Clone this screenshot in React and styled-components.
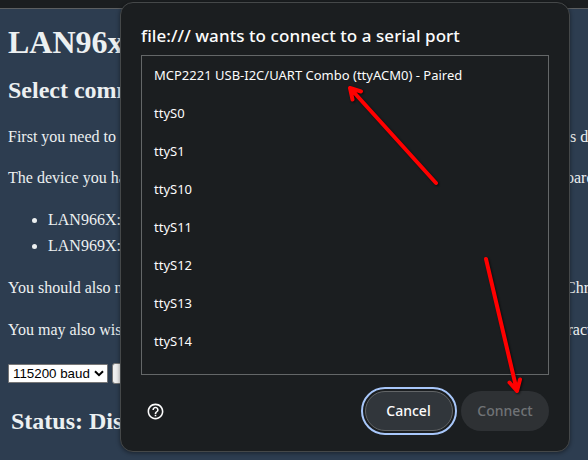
import React from "react";
import styled, { createGlobalStyle } from "styled-components";

const Global = createGlobalStyle`
  * { box-sizing: border-box; }
  body { margin: 0; background: #2d3d50; overflow: hidden; }
`;

const Screen = styled.div`
  position: relative;
  width: 588px;
  height: 460px;
  overflow: hidden;
  background: #2d3d50;
`;

const BrowserBar = styled.div`
  height: 9px;
  background: #1b1e20;
  border-bottom: 1px solid #5c5f61;
`;

const Page = styled.main`
  padding: 8px 0 0 8px;
  color: #ecf0f1;
  font: 16px/25.6px "Liberation Serif", "Times New Roman", serif;
  white-space: nowrap;
`;

const PageTitle = styled.h1`
  margin: 0;
  font-size: 32px;
  line-height: 51px;
`;

const Section = styled.h2`
  margin: 2.6px 0 0;
  font-size: 24px;
  line-height: 38.4px;
`;

const Paragraph = styled.p`
  display: grid;
  grid-template-columns: ${(p) => p.$split}px auto;
  margin: ${(p) => p.$top || 16}px 0 0;
`;

const Devices = styled.ul`
  margin: 17px 0 0;
  padding-left: 40px;
`;

const Controls = styled.div`
  display: flex;
  align-items: center;
  gap: 4px;
  height: 22px;
  margin-top: 20px;
`;

const BaudSelect = styled.div`
  display: flex;
  align-items: center;
  justify-content: space-between;
  width: 100px;
  height: 19px;
  padding: 0 3px 0 4px;
  border: 1px solid #767676;
  border-radius: 1px;
  background: #fff;
  color: #000;
  font: 13.333px "Liberation Sans", Arial, sans-serif;
`;

const PageButton = styled.div`
  width: 60px;
  height: 21px;
  border: 1px solid #767676;
  border-radius: 3px;
  background: #efefef;
`;

const Status = styled.h2`
  margin: 18px 0 0 3px;
  font-size: 24px;
  line-height: 38.4px;
`;

const Dialog = styled.section`
  position: absolute;
  left: 120px;
  top: 2px;
  width: 450px;
  height: 450px;
  display: flex;
  flex-direction: column;
  padding: 20px 20px 16px;
  border: 1px solid #454849;
  border-radius: 13px;
  background: #1b1e20;
  color: #fcfcfc;
  font-family: "Noto Sans", sans-serif;
  box-shadow: 0 1px 4px rgba(0, 0, 0, 0.45);
`;

const DialogTitle = styled.h2`
  margin: 0;
  height: 32px;
  font-size: 17px;
  font-weight: 500;
  letter-spacing: 0.07px;
  line-height: 26px;
  white-space: nowrap;
`;

const PortList = styled.ul`
  list-style: none;
  margin: 0;
  padding: 0 12px;
  width: 408px;
  height: 320px;
  border: 1px solid #646768;
`;

const Port = styled.li`
  height: 38px;
  font-size: 13px;
  line-height: 38px;
  white-space: nowrap;
`;

const Footer = styled.footer`
  display: flex;
  align-items: center;
  gap: 8px;
  height: 46px;
  margin-top: 13px;
`;

const HelpIcon = styled.svg`
  width: 19px;
  height: 19px;
  margin: 0 auto 0 4.5px;
`;

const Action = styled.div`
  display: flex;
  align-items: center;
  justify-content: center;
  width: 88px;
  height: 40px;
  padding-bottom: 1px;
  border-radius: 20px;
  background: #2e3134;
  color: #707376;
  font-size: 14px;
  font-weight: 500;
`;

const FocusedAction = styled(Action)`
  padding-right: 1px;
  border: 1px solid #626567;
  background: #31363b;
  color: #fcfcfc;
  outline: 2px solid #a8c7fa;
  outline-offset: 2px;
`;

const Annotations = styled.svg`
  position: absolute;
  inset: 0;
  filter: drop-shadow(1.5px 1.5px 1px rgba(0, 0, 0, 0.65));
`;

const PORTS = [
  "MCP2221 USB-I2C/UART Combo (ttyACM0) - Paired",
  "ttyS0",
  "ttyS1",
  "ttyS10",
  "ttyS11",
  "ttyS12",
  "ttyS13",
  "ttyS14",
];

export default function App() {
  return (
    <Screen>
      <Global />
      <BrowserBar />
      <Page>
        <PageTitle>LAN96x</PageTitle>
        <Section>Select comm</Section>
        <Paragraph $split={562} $top={15}><span>First you need to</span><span>s d</span></Paragraph>
        <Paragraph $split={558} $top={15}><span>The device you ha</span><span>oard</span></Paragraph>
        <Devices>
          <li>LAN966X:</li>
          <li>LAN969X:</li>
        </Devices>
        <Paragraph $split={557} $top={16.4}><span>You should also m</span><span>Chro</span></Paragraph>
        <Paragraph $split={559.5} $top={16.4}><span>You may also wis</span><span>ract</span></Paragraph>
        <Controls>
          <BaudSelect>
            115200 baud
            <svg width="10" height="7" viewBox="0 0 10 7" fill="none" stroke="#000" strokeWidth="2">
              <path d="M1 1.2 5 5.2 9 1.2" />
            </svg>
          </BaudSelect>
          <PageButton />
        </Controls>
        <Status>Status: Dis</Status>
      </Page>
      <Dialog>
        <DialogTitle>file:/// wants to connect to a serial port</DialogTitle>
        <PortList>
          {PORTS.map((port) => <Port key={port}>{port}</Port>)}
        </PortList>
        <Footer>
          <HelpIcon viewBox="0 0 24 24" fill="#fcfcfc">
            <path d="M11 18h2v-2h-2v2zm1-16C6.48 2 2 6.48 2 12s4.48 10 10 10 10-4.48 10-10S17.52 2 12 2zm0 18c-4.41 0-8-3.59-8-8s3.59-8 8-8 8 3.59 8 8-3.59 8-8 8zm0-14c-2.21 0-4 1.79-4 4h2c0-1.1.9-2 2-2s2 .9 2 2c0 2-3 1.75-3 5h2c0-2.25 3-2.5 3-5 0-2.21-1.79-4-4-4z" />
          </HelpIcon>
          <FocusedAction>Cancel</FocusedAction>
          <Action>Connect</Action>
        </Footer>
      </Dialog>
      <Annotations width="588" height="460" fill="none" stroke="#f00" strokeWidth="4" strokeLinecap="round" strokeLinejoin="round">
        <path d="M436 183 350 88M361 91.5 350 88 352.5 99.5" />
        <path d="M486 259 517 391M509.5 382.5 517 391 520 379.5" />
      </Annotations>
    </Screen>
  );
}
